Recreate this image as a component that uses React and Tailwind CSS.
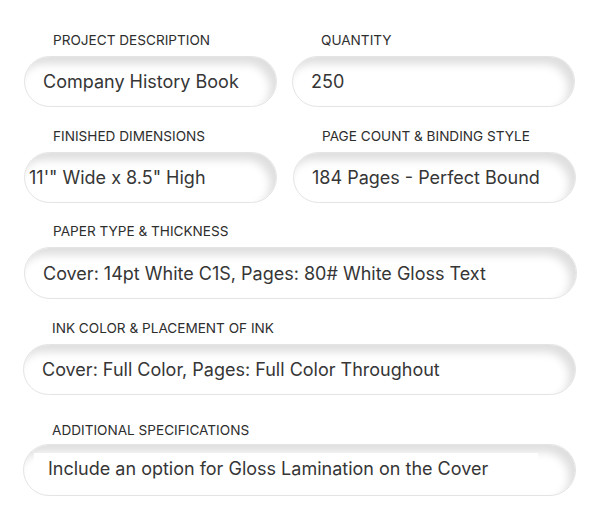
export default function App() {
  const pill =
    'h-[51px] flex items-center rounded-full bg-white border border-[#e4e4e4] shadow-[inset_-6px_7px_9px_rgba(0,0,0,0.13)] text-[18px] text-[#363636]'
  const label = 'text-[13.6px] font-normal text-[#2e2e2e] uppercase leading-none'

  return (
    <div className="w-[601px] h-[530px] bg-white pt-[34px]" style={{ fontFamily: 'Inter, "Noto Sans", sans-serif' }}>
      <div className="grid grid-cols-[253px_283px] gap-x-[15px] pl-[24px]">
        <div>
          <div className={`${label} pl-[29px] h-[22px]`}>Project Description</div>
          <div className={`${pill} pl-[18px]`}>Company History Book</div>
        </div>
        <div>
          <div className={`${label} pl-[29px] h-[22px]`}>Quantity</div>
          <div className={`${pill} pl-[18px]`}>250</div>
        </div>
      </div>

      <div className="grid grid-cols-[253px_283px] gap-x-[16px] pl-[24px] mt-[23px]">
        <div>
          <div className={`${label} pl-[29px] h-[22px]`}>Finished Dimensions</div>
          <div className={`${pill} pl-[4px]`}>11'" Wide x 8.5" High</div>
        </div>
        <div>
          <div className={`${label} pl-[29px] h-[22px]`}>Page Count &amp; Binding Style</div>
          <div className={`${pill} pl-[18px]`}>184 Pages - Perfect Bound</div>
        </div>
      </div>

      <div className="pl-[24px] w-[577px] mt-[22px]">
        <div className={`${label} pl-[29px] h-[22px]`}>Paper Type &amp; Thickness</div>
        <div className={`${pill} pl-[18px] h-[52px]`}>Cover: 14pt White C1S, Pages: 80# White Gloss Text</div>
      </div>

      <div className="pl-[23px] w-[576px] mt-[23px]">
        <div className={`${label} pl-[29px] h-[22px]`}>Ink Color &amp; Placement of Ink</div>
        <div className={`${pill} pl-[18px]`}>Cover: Full Color, Pages: Full Color Throughout</div>
      </div>

      <div className="pl-[23px] w-[576px] mt-[29px]">
        <div className={`${label} pl-[29px] h-[20px]`}>Additional Specifications</div>
        <div className={`${pill} h-[52px] pl-[10px]`}>
          <div className="bg-white w-[504px] h-[30px] mb-[4px] flex items-center pl-[14px]">
            Include an option for Gloss Lamination on the Cover
          </div>
        </div>
      </div>
    </div>
  )
}
